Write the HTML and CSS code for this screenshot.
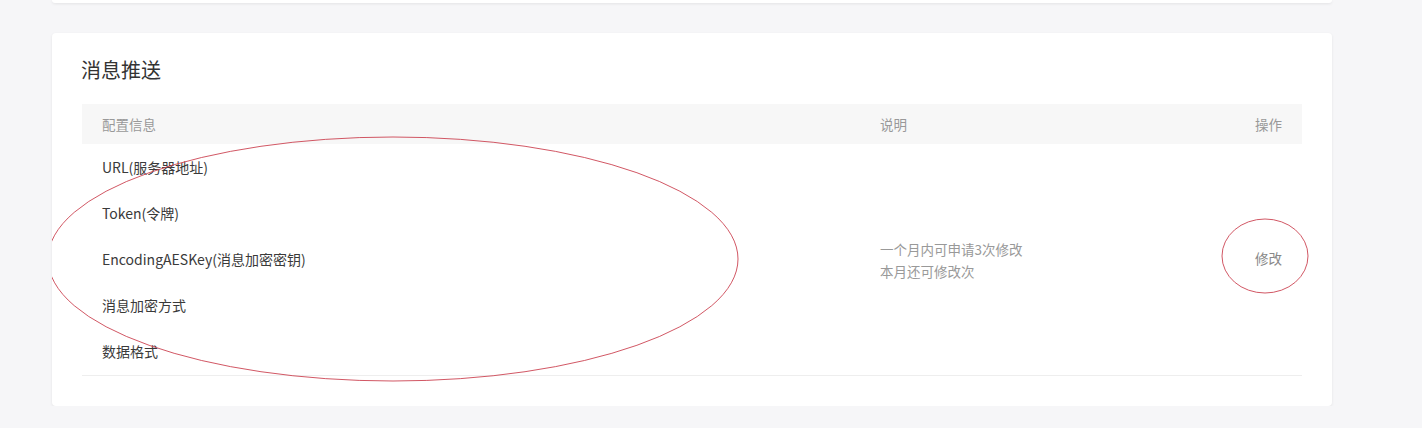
FILE: index.html
```html
<!DOCTYPE html>
<html lang="zh-CN">
<head>
    <meta charset="UTF-8">
    <meta name="viewport" content="width=device-width, initial-scale=1.0">
    <title>消息推送</title>
    <link rel="stylesheet" href="styles.css">
</head>
<body>
    <div class="page">
        <div class="card card-prev"></div>

        <div class="card">
            <h2 class="card-title">消息推送</h2>

            <div class="table">
                <div class="thead">
                    <div class="cell">配置信息</div>
                    <div class="cell">说明</div>
                    <div class="cell cell-right">操作</div>
                </div>
                <div class="tbody">
                    <div class="items">
                        <div class="item">URL(服务器地址)</div>
                        <div class="item">Token(令牌)</div>
                        <div class="item">EncodingAESKey(消息加密密钥)</div>
                        <div class="item">消息加密方式</div>
                        <div class="item">数据格式</div>
                    </div>
                    <div class="cell desc">
                        <div>一个月内可申请3次修改</div>
                        <div>本月还可修改次</div>
                    </div>
                    <div class="cell cell-right">
                        <a class="action">修改</a>
                    </div>
                </div>
            </div>

            <!-- hand-drawn marks over the screenshot -->
            <svg class="marks" width="1280" height="373" viewBox="0 0 1280 373">
                <ellipse cx="341" cy="226" rx="345" ry="122" />
                <ellipse cx="1213" cy="223" rx="43" ry="37" />
            </svg>
        </div>
    </div>
</body>
</html>
```

FILE: styles.css
```css
body {
    margin: 0;
    background: #f6f6f8;
    font-family: "Noto Sans CJK SC", "Noto Sans", sans-serif;
    color: #333;
}
.page {
    width: 1280px;
    margin-left: 52px;
}
.card {
    position: relative;
    background: #fff;
    border-radius: 4px;
    box-shadow: 0 1px 3px rgba(0, 0, 0, 0.08);
    padding: 23px 30px 30px;
}
.card-prev {
    height: 3px;
    padding: 0;
    margin-bottom: 30px;
    border-radius: 0 0 4px 4px;
}
.card-title {
    margin: 0 0 20px -1px;
    font-size: 20px;
    font-weight: normal;
    line-height: 28px;
    color: #333;
}
.table {
    border-bottom: 1px solid #eee;
}
.thead,
.tbody {
    display: grid;
    grid-template-columns: 778px 1fr 120px;
}
.thead {
    height: 40px;
    align-items: center;
    background: #f7f7f7;
    font-size: 13.5px;
    color: #999;
}
.tbody {
    align-items: center;
    padding-top: 1px;
}
.cell {
    padding: 0 20px;
}
.cell-right {
    text-align: right;
}
.items {
    display: flex;
    flex-direction: column;
}
.item {
    height: 46px;
    line-height: 44px;
    padding: 0 20px;
    font-size: 14px;
    color: #3a3a3a;
}
.desc {
    font-size: 13.5px;
    line-height: 22px;
    color: #999;
}
.action {
    display: block;
    margin-top: -4px;
    font-size: 13.5px;
    color: #888;
    cursor: pointer;
}
.marks {
    position: absolute;
    left: 0;
    top: 0;
    pointer-events: none;
}
.marks ellipse {
    fill: none;
    stroke: #cc4452;
    stroke-width: 0.9;
}
```
